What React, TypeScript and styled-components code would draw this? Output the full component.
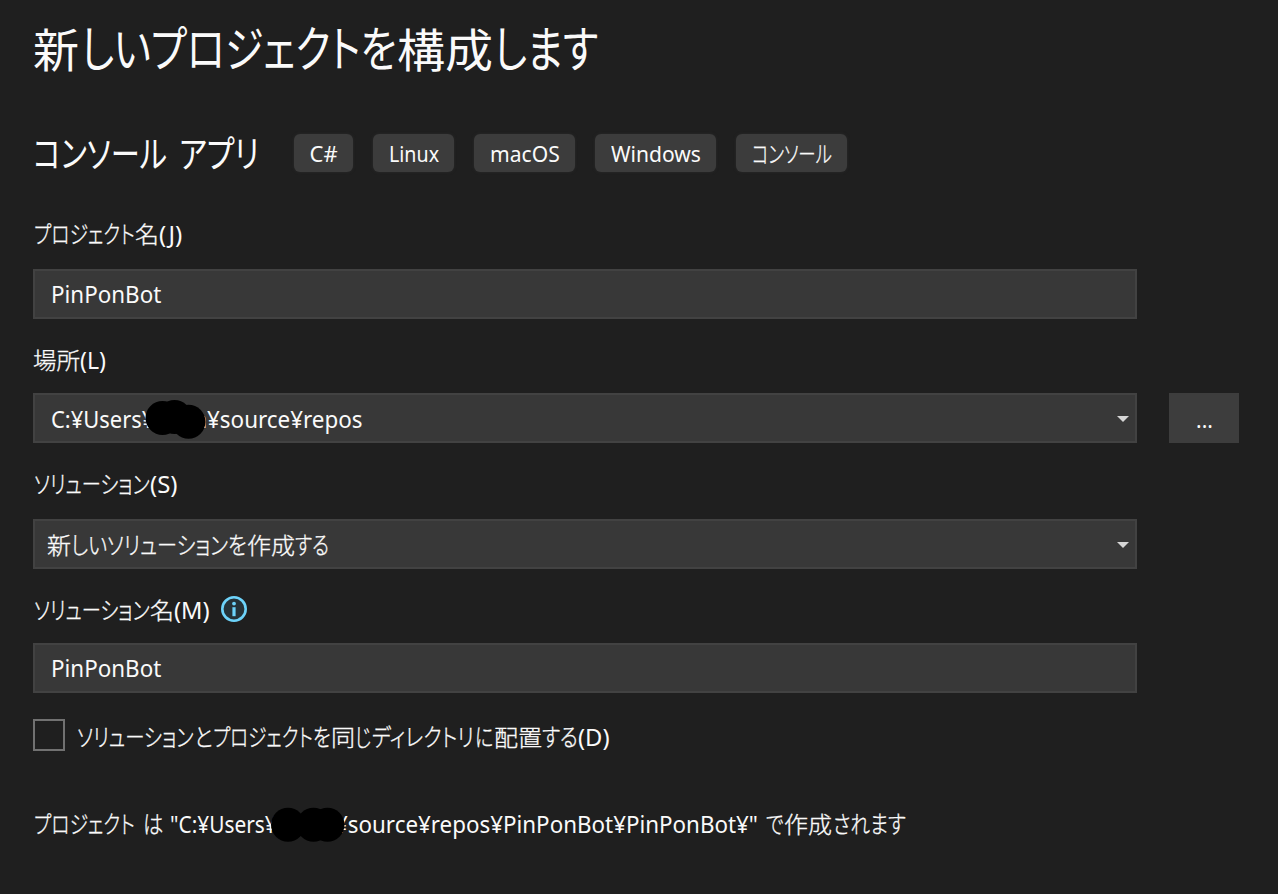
import React, { useLayoutEffect, useRef, useState } from 'react';
import styled, { createGlobalStyle } from 'styled-components';

const GlobalStyle = createGlobalStyle`
  * { box-sizing: border-box; }
  html, body { margin: 0; background: #1f1f1f; }
  body {
    color: #fafafa;
    font-family: "Noto Sans", "Noto Sans CJK JP", sans-serif;
    font-size: 23px;
    font-weight: 400;
    overflow: hidden;
  }
`;

const Page = styled.main`
  width: 1278px;
  height: 894px;
  padding-left: 33px;
  background: #1f1f1f;
  display: flex;
  flex-direction: column;
`;

const RunBox = styled.span<{ $w: number; $gap: number }>`
  display: block;
  flex: none;
  width: ${(p) => p.$w}px;
  margin-left: ${(p) => p.$gap}px;
  white-space: pre;
`;

type Script = 'latin' | 'kana' | 'kanji';

const RunText = styled.span<{ $script: Script; $bold: boolean }>`
  display: inline-block;
  line-height: 0;
  transform-origin: 0 50%;
  font-family: ${(p) => (p.$script === 'latin' ? '"Noto Sans", sans-serif' : '"Noto Sans CJK JP", sans-serif')};
  font-size: ${(p) => (p.$script === 'kana' ? '1.06em' : '1em')};
  font-weight: ${(p) => (p.$script === 'latin' || p.$bold ? 400 : 300)};
  font-feature-settings: ${(p) => (p.$script === 'latin' ? 'normal' : '"palt"')};
  -webkit-text-stroke: ${(p) => (p.$script === 'latin' || p.$bold ? '0' : '0.014em #fafafa')};
`;

/* A piece of text condensed horizontally to the advance width of the UI face. */
function Run({ w, gap = 0, bold = false, children }: { w: number; gap?: number; bold?: boolean; children: string }) {
  const ref = useRef<HTMLSpanElement>(null);
  const [scale, setScale] = useState(1);
  useLayoutEffect(() => {
    const fit = () => {
      if (ref.current && ref.current.offsetWidth) setScale(w / ref.current.offsetWidth);
    };
    fit();
    document.fonts.ready.then(fit);
  }, [w, children]);
  const script: Script = /[\u4e00-\u9fff]/.test(children)
    ? 'kanji'
    : /[\u3040-\u30ff]/.test(children)
      ? 'kana'
      : 'latin';
  return (
    <RunBox $w={w} $gap={gap}>
      <RunText ref={ref} $script={script} $bold={bold} style={{ transform: `scaleX(${scale})` }}>
        {children}
      </RunText>
    </RunBox>
  );
}

const Line = styled.div<{ $h: number; $top?: number }>`
  position: relative;
  display: flex;
  align-items: center;
  height: ${(p) => p.$h}px;
  padding-top: ${(p) => p.$top ?? 0}px;
  line-height: 34px;
`;

const Title = styled.h1`
  display: flex;
  margin: 0;
  padding-top: 14px;
  height: 134px;
  font-size: 46px;
  font-weight: 400;
  line-height: 70px;
`;

const TemplateRow = styled.div`
  display: flex;
  height: 38px;
  align-items: center;
`;

const TemplateName = styled.h2`
  display: flex;
  width: 261px;
  margin: 0;
  padding-top: 4px;
  font-size: 35px;
  font-weight: 400;
  line-height: 44px;
`;

const Chips = styled.div`
  display: flex;
  gap: 20px;
`;

const Chip = styled.span<{ $w: number; $line?: number }>`
  display: flex;
  justify-content: center;
  width: ${(p) => p.$w}px;
  height: 38px;
  border-radius: 6px;
  background: #3c3c3c;
  box-shadow: 0 0 3px #2c2c2c;
  font-size: 22px;
  line-height: ${(p) => p.$line ?? 39}px;
`;

const FieldRow = styled.div`
  display: flex;
  gap: 32px;
`;

const Field = styled.div<{ $pad?: number; $line?: number }>`
  position: relative;
  display: flex;
  align-items: flex-start;
  width: 1104px;
  height: 50px;
  padding: 0 5px 0 ${(p) => p.$pad ?? 16}px;
  border: 2px solid #424242;
  background: #383838;
  line-height: ${(p) => p.$line ?? 46}px;
`;

const Arrow = styled.svg`
  display: block;
  margin: 20px 0 0 auto;
`;

const BrowseButton = styled.button`
  width: 70px;
  height: 50px;
  padding: 3px 0 0 1px;
  border: 0;
  background: #3d3d3d;
  color: #fafafa;
  font: 21px "Noto Sans", sans-serif;
`;

const InfoIcon = styled.svg`
  margin: 0 0 2px 11px;
  display: block;
`;

const CheckBox = styled.span`
  width: 32px;
  height: 32px;
  border: 2px solid #717171;
  margin-right: 12px;
`;

const CheckText = styled.span`
  display: flex;
  padding-top: 3px;
`;

const Blot = styled.svg<{ $x: number; $y: number }>`
  position: absolute;
  left: ${(p) => p.$x}px;
  top: ${(p) => p.$y}px;
`;

const DropArrow = () => (
  <Arrow width="14" height="8" viewBox="0 0 14 8">
    <path d="M1 1h12L7 7z" fill="#d6d6d6" />
  </Arrow>
);

export default function App() {
  return (
    <>
      <GlobalStyle />
      <Page>
        <Title>
          <Run bold w={46}>新</Run>
          <Run bold w={316} gap={2}>しいプロジェクトを</Run>
          <Run bold w={96}>構成</Run>
          <Run bold w={104} gap={1}>します</Run>
        </Title>
        <TemplateRow>
          <TemplateName>
            <Run bold w={134}>コンソール</Run>
            <Run bold w={80} gap={12}>アプリ</Run>
          </TemplateName>
          <Chips>
            <Chip $w={59}><Run w={28}>C#</Run></Chip>
            <Chip $w={81}><Run w={50}>Linux</Run></Chip>
            <Chip $w={101}><Run w={70}>macOS</Run></Chip>
            <Chip $w={121}><Run w={90}>Windows</Run></Chip>
            <Chip $w={111} $line={41}><Run w={80}>コンソール</Run></Chip>
          </Chips>
        </TemplateRow>

        <Line $h={97} $top={26}>
          <Run w={101} gap={1}>プロジェクト</Run>
          <Run w={24}>名</Run>
          <Run w={23}>(J)</Run>
        </Line>
        <Field>
          <Run w={110}>PinPonBot</Run>
        </Field>

        <Line $h={74} $top={8}>
          <Run w={47}>場所</Run>
          <Run w={26}>(L)</Run>
        </Line>
        <FieldRow>
          <Field $line={48}>
            <Run w={103}>C:¥Users¥</Run>
            <Run w={14} gap={39}>n</Run>
            <Run w={156}>¥source¥repos</Run>
            <DropArrow />
            <Blot $x={110} $y={4} width="64" height="42">
              <circle cx="17.5" cy="19" r="17" />
              <circle cx="29.5" cy="18" r="17" />
              <circle cx="43.5" cy="22.7" r="17" />
            </Blot>
          </Field>
          <BrowseButton>...</BrowseButton>
        </FieldRow>

        <Line $h={76} $top={6}>
          <Run w={116} gap={1}>ソリューション</Run>
          <Run w={27}>(S)</Run>
        </Line>
        <Field $pad={12} $line={48}>
          <Run w={24}>新</Run>
          <Run w={176}>しいソリューションを</Run>
          <Run w={48}>作成</Run>
          <Run w={34}>する</Run>
          <DropArrow />
        </Field>

        <Line $h={74} $top={8}>
          <Run w={116} gap={1}>ソリューション</Run>
          <Run w={24}>名</Run>
          <Run w={36}>(M)</Run>
          <InfoIcon width="26" height="26" viewBox="0 0 26 26">
            <circle cx="13" cy="13" r="11.7" fill="#253238" stroke="#6dd3fa" strokeWidth="2.6" />
            <circle cx="13" cy="7.6" r="1.9" fill="#6dd3fa" />
            <rect x="11.4" y="11.2" width="3.2" height="9" fill="#6dd3fa" />
          </InfoIcon>
        </Line>
        <Field>
          <Run w={110}>PinPonBot</Run>
        </Field>

        <Line $h={84}>
          <CheckBox />
          <CheckText>
            <Run w={117}>ソリューション</Run>
            <Run w={18}>と</Run>
            <Run w={100} gap={1}>プロジェクト</Run>
            <Run w={18}>を</Run>
            <Run w={24}>同</Run>
            <Run w={16}>じ</Run>
            <Run w={102} gap={1}>ディレクトリ</Run>
            <Run w={18} gap={1}>に</Run>
            <Run w={48} gap={1}>配置</Run>
            <Run w={36}>する</Run>
            <Run w={32}>(D)</Run>
          </CheckText>
        </Line>

        <Line $h={94}>
          <Run w={101} gap={1}>プロジェクト</Run>
          <Run w={20} gap={8}>は</Run>
          <Run w={107} gap={7}>{'"C:¥Users¥'}</Run>
          <Run w={423} gap={58}>{'¥source¥repos¥PinPonBot¥PinPonBot¥"'}</Run>
          <Run w={18} gap={8}>で</Run>
          <Run w={48}>作成</Run>
          <Run w={73} gap={1}>されます</Run>
          <Blot $x={237} $y={30} width="76" height="36">
            <circle cx="18" cy="17.7" r="17" />
            <circle cx="43.5" cy="17.7" r="17" />
            <circle cx="57.5" cy="17.7" r="17" />
          </Blot>
        </Line>
      </Page>
    </>
  );
}
